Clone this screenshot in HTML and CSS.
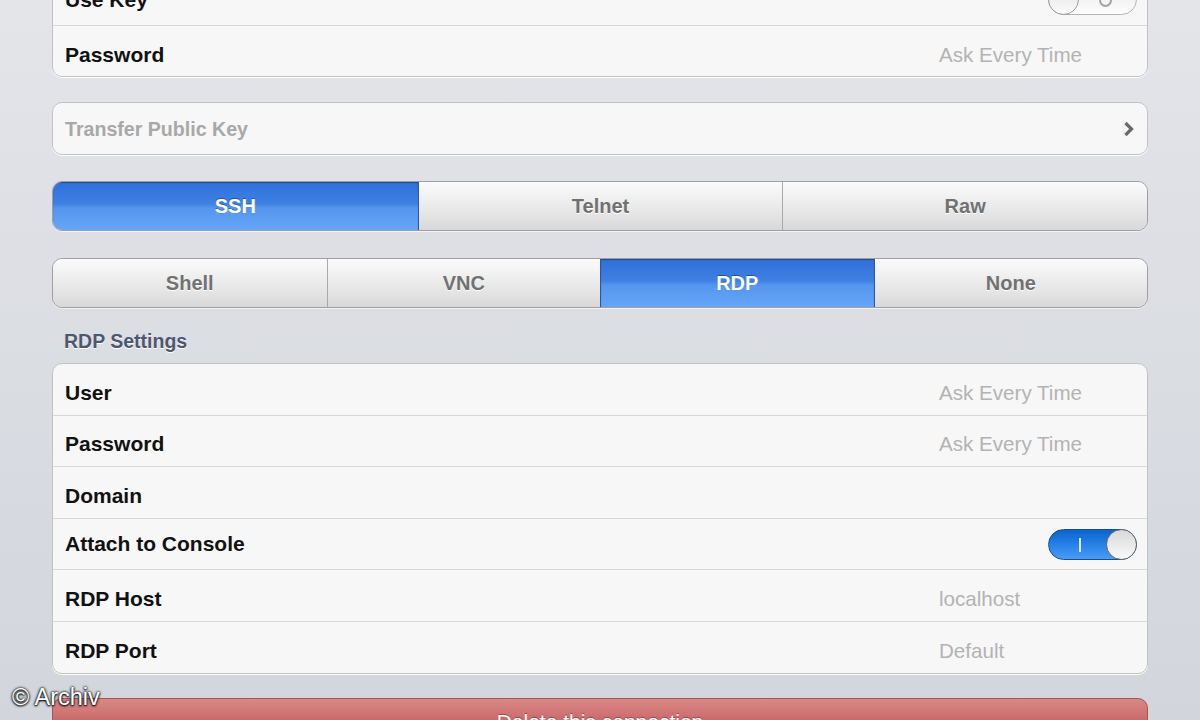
FILE: index.html
```html
<!DOCTYPE html>
<html lang="en">
<head>
    <meta charset="UTF-8">
    <meta name="viewport" content="width=device-width, initial-scale=1.0">
    <title>Connection Settings</title>
    <link rel="stylesheet" href="styles.css">
</head>
<body>

    <div class="screen">
        <div class="group first">
            <div class="row">
                <span class="label">Use Key</span>
                <span class="value"><span class="switch"><i class="mark-o"></i><i class="knob"></i></span></span>
            </div>
            <div class="row">
                <span class="label">Password</span>
                <span class="value">Ask Every Time</span>
            </div>
        </div>

        <div class="group">
            <div class="row link">
                <span class="label muted">Transfer Public Key</span>
                <svg class="chevron" width="12" height="16" viewBox="0 0 12 16"><path d="M2.5 2 L8.5 8 L2.5 14" fill="none" stroke="#6a6a6a" stroke-width="3.2"/></svg>
            </div>
        </div>

        <div class="segmented three">
            <div class="seg selected">SSH</div>
            <div class="seg">Telnet</div>
            <div class="seg">Raw</div>
        </div>

        <div class="segmented four">
            <div class="seg">Shell</div>
            <div class="seg">VNC</div>
            <div class="seg selected">RDP</div>
            <div class="seg">None</div>
        </div>

        <h2 class="section">RDP Settings</h2>

        <div class="group settings">
            <div class="row">
                <span class="label">User</span>
                <span class="value">Ask Every Time</span>
            </div>
            <div class="row">
                <span class="label">Password</span>
                <span class="value">Ask Every Time</span>
            </div>
            <div class="row">
                <span class="label">Domain</span>
                <span class="value"></span>
            </div>
            <div class="row">
                <span class="label">Attach to Console</span>
                <span class="value"><span class="switch on"><i class="mark-i"></i><i class="knob"></i></span></span>
            </div>
            <div class="row">
                <span class="label">RDP Host</span>
                <span class="value">localhost</span>
            </div>
            <div class="row">
                <span class="label">RDP Port</span>
                <span class="value">Default</span>
            </div>
        </div>

        <button class="delete">Delete this connection</button>
    </div>

    <div class="watermark">© Archiv</div>

</body>
</html>
```

FILE: styles.css
```css
*{
    margin: 0;
    padding: 0;
    box-sizing: border-box;
}
html, body{
    height: 720px;
    overflow: hidden;
}
body{
    background: linear-gradient(#e3e5e9, #d2d5dc);
    font-family: "Liberation Sans", Arial, sans-serif;
    position: relative;
}
.screen{
    display: flex;
    flex-direction: column;
    padding: 0 52px;
}
.group{
    background-color: #f7f7f7;
    border: 1px solid #c2c2c4;
    border-radius: 10px;
    box-shadow: 0 1px 0 #ffffff;
    overflow: hidden;
}
.group.first{
    margin-top: -27px;
}
.group + .group{
    margin-top: 25px;
}
.row{
    display: flex;
    align-items: center;
    height: 51px;
    padding: 0 10px 0 12px;
}
.row + .row{
    border-top: 1px solid #d8d8d8;
}
.settings .row{
    height: 50.6px;
}
.settings .row + .row{
    height: 51.6px;
}
.label{
    flex: 1;
    padding-top: 7px;
    font-size: 21px;
    font-weight: bold;
    color: #111;
}
.row:has(.switch) .label{
    padding-top: 0;
}
.label.muted{
    padding-top: 2px;
    font-size: 19.6px;
    color: #a8a8a8;
}
.value{
    width: 198px;
    display: flex;
    justify-content: flex-start;
    padding-top: 7px;
    font-size: 20.6px;
    color: #b3b3b3;
}
.value:has(.switch){
    justify-content: flex-end;
    padding-top: 0;
}
.chevron{
    margin-right: 2px;
}
.switch{
    position: relative;
    width: 89px;
    height: 31px;
    border-radius: 16px;
    border: 1px solid #b4b4b4;
    background: linear-gradient(#e9e9e9, #fdfdfd);
}
.switch .knob{
    position: absolute;
    left: -1px;
    top: -1px;
    width: 31px;
    height: 31px;
    border-radius: 50%;
    border: 1px solid #9b9b9b;
    background: linear-gradient(#e2e2e2, #fbfbfb);
}
.mark-o{
    position: absolute;
    left: 50px;
    top: 8px;
    width: 13px;
    height: 14px;
    border: 2px solid #a3a3a3;
    border-radius: 50%;
}
.switch.on{
    border-color: #0e4f9e;
    background: linear-gradient(#0b63cd, #2c86ea 60%, #4c9cf1);
}
.switch.on .knob{
    left: auto;
    right: -1px;
    border-color: #6a6a6a;
    background: linear-gradient(#d8d8d8, #fafafa);
}
.mark-i{
    position: absolute;
    left: 30px;
    top: 8px;
    width: 2px;
    height: 14px;
    background: #d9ecff;
}
.segmented{
    display: grid;
    height: 50px;
    border: 1px solid #9f9fa1;
    border-radius: 10px;
    overflow: hidden;
    box-shadow: 0 1px 0 #f2f3f5;
}
.segmented.three{
    grid-template-columns: repeat(3, 1fr);
    margin-top: 26px;
}
.segmented.four{
    grid-template-columns: repeat(4, 1fr);
    margin-top: 27px;
}
.seg{
    display: flex;
    align-items: center;
    justify-content: center;
    font-size: 20px;
    font-weight: bold;
    color: #717171;
    text-shadow: 0 1px 0 #ffffff;
    background: linear-gradient(#fbfbfb, #e4e4e4 70%, #d8d8d8);
}
.seg + .seg{
    border-left: 1px solid #a9a9a9;
}
.seg.selected{
    color: #ffffff;
    text-shadow: 0 -1px 0 rgba(0, 0, 0, 0.35);
    background: linear-gradient(#2f6fd9, #3f80e4 45%, #5596ef 55%, #66a5f7);
    box-shadow: inset 0 1px 1px rgba(0, 0, 0, 0.35);
    border-color: #2758a8;
}
.seg.selected + .seg{
    border-left-color: #2758a8;
}
.section{
    margin: 22px 0 11px 12px;
    font-size: 19.5px;
    line-height: 22px;
    color: #4d5770;
    text-shadow: 0 1px 0 #ffffff;
}
.delete{
    margin-top: 24px;
    height: 52px;
    border: 1px solid #a65353;
    border-radius: 10px;
    background: linear-gradient(#d98888, #c86464 50%, #bf5555);
    font-family: "Liberation Sans", Arial, sans-serif;
    font-size: 21px;
    color: #ffffff;
    text-shadow: 0 -1px 0 rgba(0, 0, 0, 0.3);
    padding-bottom: 4px;
}
.watermark{
    position: absolute;
    left: 12px;
    top: 684px;
    font-size: 23.5px;
    color: #ffffff;
    text-shadow: 0 0 3px #222, 0 0 2px #000, 0 1px 2px #000;
}
```
